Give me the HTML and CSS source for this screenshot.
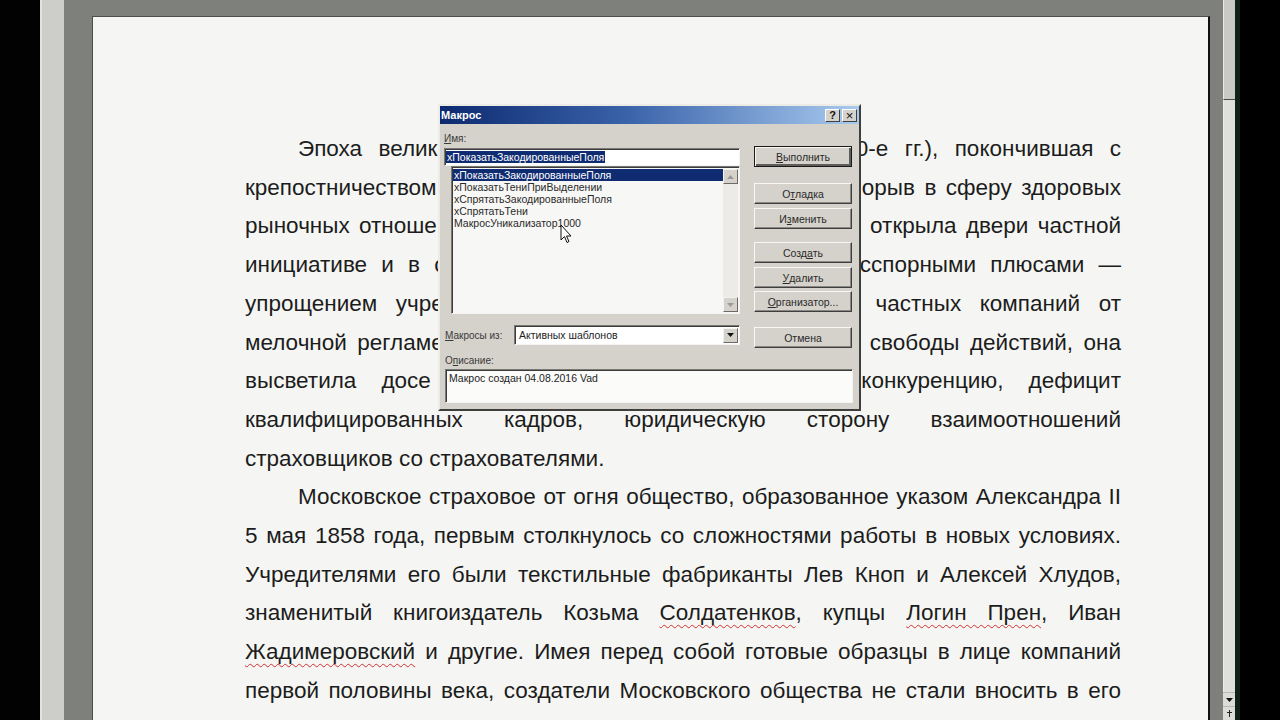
FILE: index.html
```html
<!DOCTYPE html>
<html lang="ru">
<head>
<meta charset="utf-8">
<title>Макрос</title>
<link rel="stylesheet" href="styles.css">
</head>
<body>
<div class="screen">
  <div class="edge-left"></div>
  <div class="ruler"></div>
  <div class="workspace">
    <div class="page">
      <div class="text">
        <span class="ln indent">Эпоха велик<span class="hid">их реформ Александра II (1860–187</span>0-е гг.), покончившая с</span>
        <span class="ln">крепостничеством<span class="hid">, открыла российскому страхованию пр</span>орыв в сферу здоровых</span>
        <span class="ln">рыночных отноше<span class="hid">ний. Новая эпоха либерализма широко</span> открыла двери частной</span>
        <span class="ln">инициативе и в с<span class="hid">траховом деле. Однако наряду с бе</span>сспорными плюсами —</span>
        <span class="ln">упрощением учре<span class="hid">ждения всех обществ, избавлением</span> частных компаний от</span>
        <span class="ln">мелочной регламе<span class="hid">нтации, предоставлением им широкой</span> свободы действий, она</span>
        <span class="ln">высветила досе<span class="hid">ле неведомые проблемы: острую</span> конкуренцию, дефицит</span>
        <span class="ln">квалифицированных кадров, юридическую сторону взаимоотношений</span>
        <span class="ln last">страховщиков со страхователями.</span>
        <span class="ln indent">Московское страховое от огня общество, образованное указом Александра II</span>
        <span class="ln">5 мая 1858 года, первым столкнулось со сложностями работы в новых условиях.</span>
        <span class="ln">Учредителями его были текстильные фабриканты Лев Кноп и Алексей Хлудов,</span>
        <span class="ln">знаменитый книгоиздатель Козьма <span class="err">Солдатенков</span>, купцы <span class="err">Логин Прен</span>, Иван</span>
        <span class="ln"><span class="err">Жадимеровский</span> и другие. Имея перед собой готовые образцы в лице компаний</span>
        <span class="ln">первой половины века, создатели Московского общества не стали вносить в его</span>
      </div>
    </div>
  </div>
  <div class="vscroll">
    <div class="thumb"></div>
    <div class="track"></div>
    <div class="sbtn"><svg width="9" height="6" viewBox="0 0 9 6"><path d="M1 1h7L4.5 5z" fill="#111"/></svg></div>
    <div class="sbtn"><svg width="9" height="9" viewBox="0 0 9 9"><path d="M4 1h1v2h2v1H5v4H4V4H2V3h2z" fill="#222"/></svg></div>
  </div>
  <div class="edge-right"></div>

  <div class="dialog">
    <div class="titlebar">
      <span class="title">Макрос</span>
      <span class="tbtns">
        <span class="tbtn">?</span>
        <span class="tbtn close">×</span>
      </span>
    </div>
    <div class="dbody">
      <div class="cols">
        <div class="leftcol">
          <div class="lbl first-lbl"><u>И</u>мя:</div>
          <div class="namebox"><span class="sel">xПоказатьЗакодированныеПоля</span></div>
          <div class="listbox">
            <div class="items">
              <div class="item selected">xПоказатьЗакодированныеПоля</div>
              <div class="item">xПоказатьТениПриВыделении</div>
              <div class="item">xСпрятатьЗакодированныеПоля</div>
              <div class="item">xСпрятатьТени</div>
              <div class="item">МакросУникализатор1000</div>
            </div>
            <div class="lscroll">
              <div class="sarrow"><svg width="7" height="4" viewBox="0 0 7 4"><path d="M0 4h7L3.5 0z" fill="#9a9a96"/></svg></div>
              <div class="strack"></div>
              <div class="sarrow"><svg width="7" height="4" viewBox="0 0 7 4"><path d="M0 0h7L3.5 4z" fill="#9a9a96"/></svg></div>
            </div>
          </div>
          <div class="fromrow">
            <span class="lbl"><u>М</u>акросы из:</span>
            <div class="combo">
              <span class="combotext">Активных шаблонов</span>
              <span class="combobtn"><svg width="7" height="4" viewBox="0 0 7 4"><path d="M0 0h7L3.5 4z" fill="#111"/></svg></span>
            </div>
          </div>
        </div>
        <div class="rightcol">
          <div class="btn default b1"><u>В</u>ыполнить</div>
          <div class="btn b2">О<u>т</u>ладка</div>
          <div class="btn b3">И<u>з</u>менить</div>
          <div class="btn b4">Созд<u>а</u>ть</div>
          <div class="btn b5"><u>У</u>далить</div>
          <div class="btn b6"><u>О</u>рганизатор...</div>
          <div class="btn b7">Отмена</div>
        </div>
      </div>
      <div class="lbl desc-lbl">О<u>п</u>исание:</div>
      <div class="descbox">Макрос создан 04.08.2016 Vad</div>
    </div>
  </div>

  <svg class="cursor" width="13" height="20" viewBox="0 0 13 20">
    <path d="M1 1v15l3.5-3.5 2.5 6 2-1-2.5-5.5H11z" fill="#fff" stroke="#111" stroke-width="1" stroke-linejoin="round"/>
  </svg>
</div>
</body>
</html>
```

FILE: styles.css
```css
html, body {
  margin: 0;
  padding: 0;
  background: #000;
}

body {
  width: 1280px;
  height: 720px;
  overflow: hidden;
  font-family: "Liberation Sans", Arial, sans-serif;
}

.screen {
  position: relative;
  display: flex;
  width: 1280px;
  height: 720px;
  overflow: hidden;
}

.edge-left {
  width: 40px;
  background: #020202;
  flex: none;
}

.ruler {
  width: 24px;
  flex: none;
  box-sizing: border-box;
  background: #cdcec9;
  border-left: 2px solid #e2e3de;
}

.workspace {
  width: 1159px;
  flex: none;
  box-sizing: border-box;
  background: #7e807c;
  padding: 16px 0 0 28px;
}

.page {
  width: 1118px;
  height: 720px;
  box-sizing: border-box;
  background: #f5f6f3;
  border-top: 1px solid #4e4f4c;
  border-left: 1px solid #4e4f4c;
  border-right: 2px solid #111;
  padding: 113px 87px 0 152px;
}

.text {
  width: 876px;
  font-size: 22.5px;
  line-height: 38.7px;
  color: #1c1c1c;
}

.ln {
  display: block;
  text-align: justify;
  text-align-last: justify;
  white-space: nowrap;
}

.ln.indent {
  text-indent: 53px;
}

.ln.last {
  text-align-last: left;
}

.hid {
  visibility: hidden;
}

.err {
  text-decoration: underline wavy #d03030;
  text-decoration-thickness: 1px;
  text-underline-offset: 4px;
  text-decoration-skip-ink: none;
}

.vscroll {
  width: 12px;
  flex: none;
  display: flex;
  flex-direction: column;
  background: #dfe0db;
}

.thumb {
  height: 99px;
  background: #c9cac5;
  border-bottom: 1px solid #4a4a48;
  border-left: 1px solid #e8e9e4;
}

.track {
  flex: 1;
  border-left: 1px solid #ecece8;
}

.sbtn {
  height: 13px;
  display: flex;
  align-items: center;
  justify-content: center;
  background: #dcddd8;
  border-top: 1px solid #b9bab5;
}

.edge-right {
  flex: 1;
  background: #000;
  border-left: 5px solid #10211a;
}

/* dialog */
.dialog {
  position: absolute;
  left: 438px;
  top: 104px;
  width: 423px;
  height: 307px;
  box-sizing: border-box;
  background: #d5d2cb;
  border: 2px solid;
  border-color: #ecebe6 #3e3e3c #3e3e3c #ecebe6;
  font-family: "Liberation Sans", Arial, sans-serif;
  font-size: 11px;
  color: #1e1e1e;
}

.titlebar {
  height: 18px;
  display: flex;
  align-items: center;
  justify-content: space-between;
  padding: 0 2px 0 1px;
  background: linear-gradient(90deg, #0d2a70 0%, #3a63aa 45%, #a9cbef 100%);
}

.title {
  color: #fff;
  font-weight: bold;
  font-size: 11px;
}

.tbtns {
  display: flex;
  gap: 1px;
}

.tbtn {
  width: 15px;
  height: 13px;
  box-sizing: border-box;
  background: #d5d2cb;
  border: 1px solid;
  border-color: #fff #404040 #404040 #fff;
  font-size: 11px;
  font-weight: bold;
  line-height: 11px;
  text-align: center;
  color: #111;
}

.tbtn.close {
  font-size: 13px;
  font-weight: normal;
  margin-left: 1px;
}

.dbody {
  padding: 0 7px 0 4px;
}

.cols {
  display: flex;
  gap: 14px;
}

.leftcol {
  width: 296px;
  display: flex;
  flex-direction: column;
}

.lbl {
  height: 13px;
  line-height: 13px;
  color: #3a3a3a;
  font-size: 10px;
}

.first-lbl {
  margin-top: 8px;
  margin-bottom: 3px;
}

.namebox {
  height: 18px;
  box-sizing: border-box;
  background: #fff;
  border: 1px solid;
  border-color: #7a7874 #f4f4f2 #f4f4f2 #7a7874;
  box-shadow: inset 1px 1px 0 #3b3b3b;
  padding: 1px 0 0 1px;
  line-height: 14px;
  font-size: 10.5px;
}

.sel {
  background: #0f2c72;
  color: #fff;
  padding: 0 1px;
}

.listbox {
  margin-left: 7px;
  width: 289px;
  height: 148px;
  box-sizing: border-box;
  background: #f7f7f5;
  border: 1px solid;
  border-color: #7a7874 #f4f4f2 #f4f4f2 #7a7874;
  box-shadow: inset 1px 1px 0 #3b3b3b;
  display: flex;
  padding: 2px 1px 1px 1px;
}

.items {
  flex: 1;
  font-size: 10.5px;
  line-height: 12px;
}

.item {
  padding-left: 1px;
  height: 12px;
  white-space: nowrap;
  color: #2a2a2a;
}

.item.selected {
  background: #0f2c72;
  color: #fff;
}

.lscroll {
  width: 15px;
  display: flex;
  flex-direction: column;
  background: #ecebe7;
}

.sarrow {
  height: 15px;
  box-sizing: border-box;
  display: flex;
  align-items: center;
  justify-content: center;
  background: #d5d2cb;
  border: 1px solid;
  border-color: #f2f2ef #6c6b67 #6c6b67 #f2f2ef;
}

.strack {
  flex: 1;
}

.fromrow {
  margin-top: 11px;
  height: 20px;
  display: flex;
  align-items: center;
}

.fromrow .lbl {
  width: 69px;
  margin-left: 1px;
}

.combo {
  flex: 1;
  height: 20px;
  box-sizing: border-box;
  background: #fff;
  border: 1px solid;
  border-color: #7a7874 #f4f4f2 #f4f4f2 #7a7874;
  box-shadow: inset 1px 1px 0 #3b3b3b;
  display: flex;
  align-items: center;
  padding: 1px 1px 1px 4px;
}

.combotext {
  flex: 1;
  font-size: 10.5px;
}

.combobtn {
  width: 15px;
  height: 15px;
  box-sizing: border-box;
  display: flex;
  align-items: center;
  justify-content: center;
  background: #d5d2cb;
  border: 1px solid;
  border-color: #f2f2ef #6c6b67 #6c6b67 #f2f2ef;
}

.rightcol {
  width: 98px;
  display: flex;
  flex-direction: column;
}

.btn {
  height: 21px;
  box-sizing: border-box;
  border: 1px solid;
  border-color: #f6f6f3 #3e3e3c #3e3e3c #f6f6f3;
  box-shadow: inset -1px -1px 0 #8a8884;
  display: flex;
  align-items: center;
  justify-content: center;
  font-size: 10.5px;
  color: #2a2a2a;
}

.btn.default {
  border: 1px solid #1a1a1a;
  box-shadow: inset 1px 1px 0 #f6f6f3, inset -2px -2px 0 #5e5d5a;
}

.b1 { margin-top: 22px; }
.b2 { margin-top: 16px; }
.b3 { margin-top: 4px; }
.b4 { margin-top: 13px; }
.b5 { margin-top: 4px; }
.b6 { margin-top: 3px; }
.b7 { margin-top: 15px; }

.desc-lbl {
  margin-top: 6px;
  margin-left: 1px;
}

.descbox {
  margin-top: 2px;
  margin-left: 1px;
  width: 408px;
  height: 34px;
  box-sizing: border-box;
  background: #fbfbfa;
  border: 1px solid;
  border-color: #7a7874 #f4f4f2 #f4f4f2 #7a7874;
  box-shadow: inset 1px 1px 0 #3b3b3b;
  padding: 2px 3px;
  font-size: 10.5px;
  line-height: 13px;
}

.cursor {
  position: absolute;
  left: 560px;
  top: 224px;
}
```
